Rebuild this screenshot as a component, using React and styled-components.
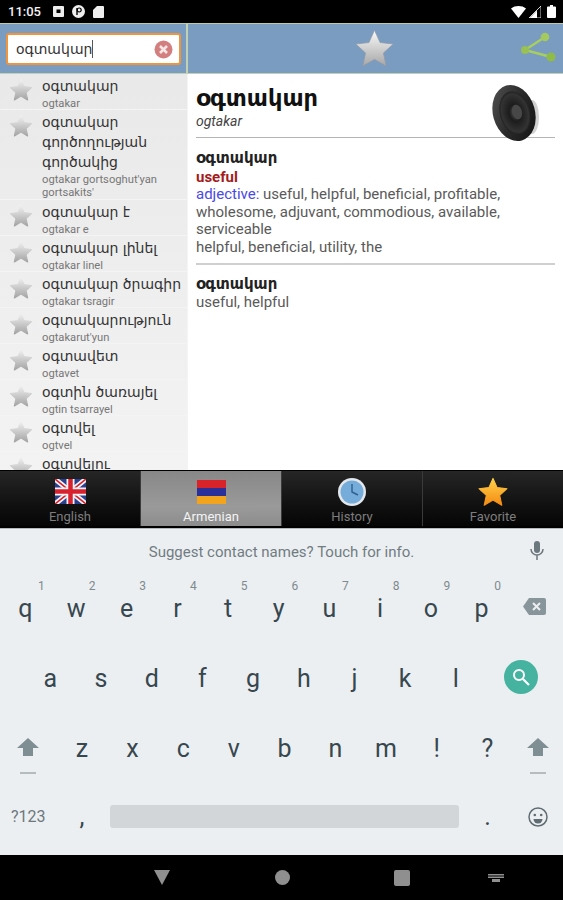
import React from "react";
import styled, { createGlobalStyle } from "styled-components";

const GlobalStyle = createGlobalStyle`
  html, body { margin: 0; padding: 0; background: #000; }
  body { font-family: Roboto, "Liberation Sans", sans-serif; }
`;

const ARM = `"DejaVu Sans", "Noto Sans", sans-serif`;

const Screen = styled.div`
  width: 563px;
  height: 900px;
  display: flex;
  flex-direction: column;
  overflow: hidden;
  background: #fff;
`;

/* status bar */
const StatusBar = styled.div`
  height: 23px;
  flex: none;
  background: #000;
  display: flex;
  align-items: center;
  padding: 0 7px 0 8px;
  color: #f2f2f2;
`;
const Clock = styled.span`
  font-size: 13px;
  font-weight: 500;
  width: 45px;
`;
const StatusIcons = styled.div`
  display: flex;
  align-items: center;
  gap: ${(p) => p.$gap}px;
  margin-left: ${(p) => (p.$right ? "auto" : "0")};
`;

/* top part */
const Main = styled.div`
  height: 447px;
  flex: none;
  display: grid;
  grid-template-columns: 188px 1fr;
  grid-template-rows: 51px 1fr;
  overflow: hidden;
`;
const SearchHeader = styled.div`
  background: #7a9cc1;
  border-top: 1px solid #bdc9a8;
  border-bottom: 1px solid #c3d0b4;
  border-right: 2px solid #c3d0b4;
  padding: 9px 5px 6px 6px;
  box-sizing: border-box;
`;
const SearchBox = styled.div`
  height: 32px;
  box-sizing: border-box;
  border: 2px solid #f0953c;
  border-radius: 3px;
  background: #fff;
  display: flex;
  align-items: center;
  padding: 0 6px 0 8px;
`;
const SearchText = styled.span`
  font-family: ${ARM};
  font-size: 14px;
  color: #333;
  border-right: 1px solid #555;
  line-height: 18px;
`;
const ClearButton = styled.span`
  margin-left: auto;
  display: flex;
`;
const ActionHeader = styled.div`
  background: #7a9cc1;
  border-top: 1px solid #bdc9a8;
  border-bottom: 1px solid #c3d0b4;
  box-sizing: border-box;
  display: grid;
  grid-template-columns: 1fr auto 1fr;
  align-items: center;
  padding-right: 3px;
`;
const ActionSlot = styled.div`
  grid-column: ${(p) => p.$col};
  justify-self: ${(p) => p.$align};
  display: flex;
  margin-right: ${(p) => p.$inset || 0}px;
`;

/* word list */
const WordList = styled.div`
  background: linear-gradient(#e9e9e9, #f3f3f3);
  overflow: hidden;
  border-right: 1px solid #f4f4f4;
`;
const WordRow = styled.div`
  display: flex;
  box-sizing: border-box;
  padding: 2px 3px ${(p) => (p.$tall ? 1 : 0)}px 9px;
  box-shadow: inset 0 -1px 0 #f4f4f4;
`;
const StarSlot = styled.div`
  width: 33px;
  flex: none;
  padding-top: 2px;
`;
const WordText = styled.div`
  min-width: 0;
`;
const WordTitle = styled.div`
  font-family: ${ARM};
  font-size: 14px;
  line-height: 20px;
  color: #333;
`;
const WordTranslit = styled.div`
  font-size: 11.2px;
  line-height: 13px;
  margin-top: 1px;
  color: #777;
`;

/* entry */
const Entry = styled.div`
  padding: 12px 8px 0 8px;
  background: #fff;
`;
const EntryHead = styled.div`
  position: relative;
  height: 51px;
  border-bottom: 1px solid #b5b5b5;
`;
const EntryTitle = styled.div`
  font-family: ${ARM};
  font-size: 22.5px;
  font-weight: bold;
  line-height: 24px;
  color: #111;
`;
const EntryTranslit = styled.div`
  font-size: 14px;
  font-style: italic;
  line-height: 22px;
  color: #444;
`;
const SpeakerIcon = styled.div`
  position: absolute;
  right: 13px;
  top: -3px;
  display: flex;
`;
const Block = styled.div`
  padding: ${(p) => (p.$rule ? "11px 0 6px" : "10px 0 9px")};
  border-bottom: ${(p) => (p.$rule ? "2px solid #cfcfcf" : "none")};
`;
const BlockWord = styled.div`
  font-family: ${ARM};
  font-size: 15px;
  font-weight: bold;
  line-height: 19px;
  color: #222;
`;
const Meaning = styled.div`
  font-size: 15px;
  font-weight: bold;
  line-height: 18px;
  color: #a31c1c;
`;
const BodyText = styled.div`
  font-size: 15px;
  line-height: 17.7px;
  color: #5a5a5a;
`;
const PartOfSpeech = styled.span`
  color: #4a4ae6;
`;

/* tabs */
const TabBar = styled.div`
  height: 58px;
  flex: none;
  display: grid;
  grid-template-columns: repeat(4, 1fr);
  gap: 1px;
  background: #3a3a3a;
  border-top: 1px solid #000;
  border-bottom: 2px solid #000;
  box-sizing: border-box;
`;
const Tab = styled.div`
  display: flex;
  flex-direction: column;
  align-items: center;
  background: ${(p) => (p.$active ? "linear-gradient(#888, #9a9a9a 65%, #8c8c8c)" : "linear-gradient(#262626, #111 60%, #050505)")};
  color: ${(p) => (p.$active ? "#f4f4f4" : "#7d7d7d")};
  font-size: 13px;
  line-height: 14px;
`;
const TabIcon = styled.div`
  height: 31px;
  margin: 5px 0 3px;
  display: flex;
  align-items: center;
`;

/* keyboard */
const Keyboard = styled.div`
  height: 327px;
  flex: none;
  box-sizing: border-box;
  border-top: 1px solid #b5b9bb;
  background: #eceff1;
  display: flex;
  flex-direction: column;
`;
const SuggestStrip = styled.div`
  height: 44px;
  flex: none;
  position: relative;
  display: flex;
  align-items: center;
  justify-content: center;
  font-size: 15px;
  color: #707c82;
  box-sizing: border-box;
  padding-top: 2px;
`;
const MicIcon = styled.div`
  position: absolute;
  right: 19px;
  top: 12px;
  display: flex;
`;
const KeyRow = styled.div`
  height: ${(p) => p.$h || 70}px;
  flex: none;
  display: flex;
  padding-left: ${(p) => p.$inset || 0}px;
`;
const Key = styled.div`
  position: relative;
  width: ${(p) => p.$w || 50.7}px;
  flex: none;
  display: flex;
  align-items: center;
  justify-content: center;
  font-size: 25px;
  color: #37474f;
`;
const KeyHint = styled.span`
  position: absolute;
  top: 6px;
  right: 6px;
  font-size: 12px;
  color: #7e8a90;
`;
const SymbolsKey = styled.span`
  font-size: 16px;
  color: #6c787e;
`;
const SpaceBar = styled.div`
  flex: 1;
  align-self: center;
  height: 23px;
  border-radius: 3px;
  background: #d2d6d9;
  margin: 0 3px;
`;
const SearchKey = styled.div`
  width: 34px;
  height: 34px;
  border-radius: 50%;
  background: #45b3a0;
  display: flex;
  align-items: center;
  justify-content: center;
  margin-bottom: 2px;
`;
const ShiftGlyph = styled.svg`
  margin-top: 15px;
`;
const BackspaceGlyph = styled.svg`
  margin-bottom: 4px;
`;

/* navigation bar */
const NavBar = styled.div`
  flex: 1;
  background: #000;
  display: grid;
  grid-template-columns: repeat(3, 120px) 68px;
  justify-content: start;
  justify-items: center;
  align-items: center;
  padding-left: 102px;
  box-sizing: border-box;
`;

const STAR_PATH = "M12 1.8l3.1 6.9 7.4.8-5.5 5 1.6 7.4-6.6-3.8-6.6 3.8L7 14.5l-5.5-5 7.4-.8z";

const ListStar = ({ id }) => (
  <svg width="24" height="24" viewBox="0 0 24 24">
    <defs>
      <linearGradient id={id} x1="0" y1="0" x2="0" y2="1">
        <stop offset="0" stopColor="#f0f0f0" />
        <stop offset="1" stopColor="#a4a4a4" />
      </linearGradient>
    </defs>
    <path d={STAR_PATH} fill={`url(#${id})`} stroke={`url(#${id})`} strokeWidth="1.2" strokeLinejoin="round" />
  </svg>
);

const HeaderStar = () => (
  <svg width="43" height="43" viewBox="0 0 24 24">
    <defs>
      <linearGradient id="headStar" x1="0" y1="0" x2="0" y2="1">
        <stop offset="0" stopColor="#fafafa" />
        <stop offset="1" stopColor="#a6a6a6" />
      </linearGradient>
    </defs>
    <path d={STAR_PATH} fill="url(#headStar)" stroke="#8c99a8" strokeWidth=".4" strokeLinejoin="round" />
  </svg>
);

const ShareIcon = () => (
  <svg width="38" height="36" viewBox="0 0 38 36">
    <path d="M26 6L6 19l26 7" fill="none" stroke="#a6cf5e" strokeWidth="2.400" />
    <circle cx="26" cy="6" r="4.300" fill="#a3c95f" />
    <circle cx="6" cy="19" r="4" fill="#98c052" />
    <circle cx="32" cy="26" r="4.500" fill="#8fbb48" />
  </svg>
);

const Speaker = () => (
  <svg width="52" height="60" viewBox="0 0 52 60">
    <defs>
      <radialGradient id="cone" cx="0.5" cy="0.5" r="0.55">
        <stop offset="0" stopColor="#4d4d4d" />
        <stop offset="0.35" stopColor="#1c1c1c" />
        <stop offset="0.8" stopColor="#333" />
        <stop offset="1" stopColor="#111" />
      </radialGradient>
      <linearGradient id="rim" x1="0" y1="0" x2="1" y2="1">
        <stop offset="0" stopColor="#555" />
        <stop offset="0.5" stopColor="#2a2a2a" />
        <stop offset="1" stopColor="#111" />
      </linearGradient>
    </defs>
    <ellipse cx="42" cy="34" rx="7" ry="17" fill="#bdbdbd" opacity=".7" />
    <ellipse cx="24" cy="30" rx="21" ry="28.500" transform="rotate(-16 24 30)" fill="url(#rim)" />
    <ellipse cx="25" cy="30" rx="15" ry="22" transform="rotate(-16 25 30)" fill="url(#cone)" />
    <ellipse cx="27" cy="29" rx="5" ry="7.500" transform="rotate(-16 27 29)" fill="#474747" />
  </svg>
);

const UkFlag = () => (
  <svg width="31" height="25" viewBox="0 0 31 25">
    <path d="M0 0h31v25H0z" fill="#2a3f8f" />
    <path d="M0 0l31 25M31 0L0 25" stroke="#f4f4f4" strokeWidth="5" />
    <path d="M0 0l31 25M31 0L0 25" stroke="#d8202f" strokeWidth="1.600" />
    <path d="M15.500 0v25M0 12.500h31" stroke="#f4f4f4" strokeWidth="8" />
    <path d="M15.500 0v25M0 12.500h31" stroke="#d8202f" strokeWidth="4.500" />
  </svg>
);

const AmFlag = () => (
  <svg width="29" height="24" viewBox="0 0 29 24">
    <rect width="29" height="8" fill="#d9232b" />
    <rect y="8" width="29" height="8" fill="#2b2f9a" />
    <rect y="16" width="29" height="8" fill="#f2a41c" />
  </svg>
);

const ClockIcon = () => (
  <svg width="30" height="30" viewBox="0 0 30 30">
    <circle cx="15" cy="15" r="14" fill="#e4e8ec" />
    <circle cx="15" cy="15" r="11.500" fill="#76acd9" />
    <path d="M15 7v8l6 3" fill="none" stroke="#2f5f8f" strokeWidth="1.400" />
  </svg>
);

const FavStar = () => (
  <svg width="32" height="32" viewBox="0 0 24 24">
    <defs>
      <linearGradient id="favStar" x1="0" y1="0" x2="0" y2="1">
        <stop offset="0" stopColor="#ffd24a" />
        <stop offset="1" stopColor="#f58a12" />
      </linearGradient>
    </defs>
    <path d={STAR_PATH} fill="url(#favStar)" stroke="url(#favStar)" strokeWidth=".8" strokeLinejoin="round" />
  </svg>
);

const ShiftIcon = () => (
  <ShiftGlyph width="24" height="38" viewBox="0 0 24 38">
    <path d="M12 1L23 11h-6v8H7v-8H1z" fill="#7f8e93" />
    <rect x="4" y="35" width="16" height="2" fill="#b4bcc0" />
  </ShiftGlyph>
);

const WORDS = [
  { hy: "օգտակար", tr: "ogtakar" },
  { hy: "օգտակար գործողության գործակից", tr: "ogtakar gortsoghut'yan gortsakits'", tall: true },
  { hy: "օգտակար է", tr: "ogtakar e" },
  { hy: "օգտակար լինել", tr: "ogtakar linel" },
  { hy: "օգտակար ծրագիր", tr: "ogtakar tsragir" },
  { hy: "օգտակարություն", tr: "ogtakarut'yun" },
  { hy: "օգտավետ", tr: "ogtavet" },
  { hy: "օգտին ծառայել", tr: "ogtin tsarrayel" },
  { hy: "օգտվել", tr: "ogtvel" },
  { hy: "օգտվելու" },
];

const TOP_KEYS = [
  ["q", "1"], ["w", "2"], ["e", "3"], ["r", "4"], ["t", "5"],
  ["y", "6"], ["u", "7"], ["i", "8"], ["o", "9"], ["p", "0"],
];

const App = () => (
  <Screen>
    <GlobalStyle />
    <StatusBar>
      <Clock>11:05</Clock>
      <StatusIcons $gap={8}>
        <svg width="11" height="11" viewBox="0 0 11 11">
          <path d="M1 0h9a1 1 0 011 1v9a1 1 0 01-1 1H1a1 1 0 01-1-1V1a1 1 0 011-1z" fill="#eee" />
          <rect x="3.500" y="3.500" width="4" height="3.500" fill="#000" />
        </svg>
        <svg width="13" height="13" viewBox="0 0 13 13">
          <circle cx="6.500" cy="6.500" r="6.500" fill="#eee" />
          <path d="M5 3v7" stroke="#000" strokeWidth="1.400" />
          <circle cx="7.200" cy="5" r="2" fill="none" stroke="#000" strokeWidth="1.200" />
        </svg>
        <svg width="11" height="12" viewBox="0 0 11 12">
          <path d="M4 0h6a1 1 0 011 1v10a1 1 0 01-1 1H1a1 1 0 01-1-1V4z" fill="#eee" />
        </svg>
      </StatusIcons>
      <StatusIcons $right $gap={3}>
        <svg width="15" height="12" viewBox="0 0 15 12">
          <path d="M0 2.500C4-.8 11-.8 15 2.500L7.500 12z" fill="#fff" />
        </svg>
        <svg width="12" height="12" viewBox="0 0 12 12">
          <path d="M12 0v12H0z" fill="none" stroke="#fff" strokeWidth=".8" />
          <path d="M8 4.500V12H0.800z" fill="#fff" />
        </svg>
        <svg width="9" height="13" viewBox="0 0 9 13" style={{ marginLeft: 3 }}>
          <path d="M3 0h3v1.500h2a1 1 0 011 1V12a1 1 0 01-1 1H1a1 1 0 01-1-1V2.500a1 1 0 011-1h2z" fill="#fff" />
        </svg>
      </StatusIcons>
    </StatusBar>

    <Main>
      <SearchHeader>
        <SearchBox>
          <SearchText>օգտակար</SearchText>
          <ClearButton>
            <svg width="19" height="19" viewBox="0 0 19 19">
              <circle cx="9.500" cy="9.500" r="9" fill="#d47f7f" />
              <path d="M6 6l7 7M13 6l-7 7" stroke="#f6e6e6" strokeWidth="2.600" />
            </svg>
          </ClearButton>
        </SearchBox>
      </SearchHeader>
      <ActionHeader>
        <ActionSlot $col={2} $align="center">
          <HeaderStar />
        </ActionSlot>
        <ActionSlot $col={3} $align="end" $inset={3}>
          <ShareIcon />
        </ActionSlot>
      </ActionHeader>

      <WordList>
        {WORDS.map((w, i) => (
          <WordRow key={w.hy} $tall={w.tall}>
            <StarSlot>
              <ListStar id={`star${i}`} />
            </StarSlot>
            <WordText>
              <WordTitle>{w.hy}</WordTitle>
              {w.tr && <WordTranslit>{w.tr}</WordTranslit>}
            </WordText>
          </WordRow>
        ))}
      </WordList>

      <Entry>
        <EntryHead>
          <EntryTitle>օգտակար</EntryTitle>
          <EntryTranslit>ogtakar</EntryTranslit>
          <SpeakerIcon>
            <Speaker />
          </SpeakerIcon>
        </EntryHead>
        <Block $rule>
          <BlockWord>օգտակար</BlockWord>
          <Meaning>useful</Meaning>
          <BodyText>
            <PartOfSpeech>adjective:</PartOfSpeech> useful, helpful, beneficial, profitable,
            <br />
            wholesome, adjuvant, commodious, available,
            <br />
            serviceable
            <br />
            helpful, beneficial, utility, the
          </BodyText>
        </Block>
        <Block>
          <BlockWord>օգտակար</BlockWord>
          <BodyText>useful, helpful</BodyText>
        </Block>
      </Entry>
    </Main>

    <TabBar>
      <Tab>
        <TabIcon><UkFlag /></TabIcon>
        English
      </Tab>
      <Tab $active>
        <TabIcon><AmFlag /></TabIcon>
        Armenian
      </Tab>
      <Tab>
        <TabIcon><ClockIcon /></TabIcon>
        History
      </Tab>
      <Tab>
        <TabIcon><FavStar /></TabIcon>
        Favorite
      </Tab>
    </TabBar>

    <Keyboard>
      <SuggestStrip>
        Suggest contact names? Touch for info.
        <MicIcon>
          <svg width="14" height="20" viewBox="0 0 14 20">
            <rect x="4" y="0" width="6" height="12" rx="3" fill="#6b787e" />
            <path d="M1 8a6 6 0 0012 0M7 14v5" fill="none" stroke="#6b787e" strokeWidth="1.500" />
          </svg>
        </MicIcon>
      </SuggestStrip>
      <KeyRow>
        {TOP_KEYS.map(([k, n]) => (
          <Key key={k}>
            {k}
            <KeyHint>{n}</KeyHint>
          </Key>
        ))}
        <Key $w={56}>
          <BackspaceGlyph width="23" height="17" viewBox="0 0 23 17">
            <path d="M6 0h15a2 2 0 012 2v13a2 2 0 01-2 2H6L0 8.500z" fill="#88959a" />
            <path d="M10 5l7 7M17 5l-7 7" stroke="#eceff1" strokeWidth="2" />
          </BackspaceGlyph>
        </Key>
      </KeyRow>
      <KeyRow $inset={25}>
        {"asdfghjkl".split("").map((k) => (
          <Key key={k}>{k}</Key>
        ))}
        <Key $w={80}>
          <SearchKey>
            <svg width="20" height="20" viewBox="0 0 20 20">
              <circle cx="8" cy="8" r="5" fill="none" stroke="#fff" strokeWidth="2" />
              <path d="M12 12l6 6" stroke="#fff" strokeWidth="2.200" />
            </svg>
          </SearchKey>
        </Key>
      </KeyRow>
      <KeyRow>
        <Key $w={56.5}><ShiftIcon /></Key>
        {"zxcvbnm!?".split("").map((k) => (
          <Key key={k}>{k}</Key>
        ))}
        <Key $w={50}><ShiftIcon /></Key>
      </KeyRow>
      <KeyRow $h={67}>
        <Key $w={56.5}><SymbolsKey>?123</SymbolsKey></Key>
        <Key>,</Key>
        <SpaceBar />
        <Key>.</Key>
        <Key $w={50}>
          <svg width="20" height="20" viewBox="0 0 20 20">
            <circle cx="10" cy="10" r="9" fill="none" stroke="#5f6d73" strokeWidth="1.500" />
            <circle cx="6.800" cy="8" r="1.300" fill="#5f6d73" />
            <circle cx="13.200" cy="8" r="1.300" fill="#5f6d73" />
            <path d="M5.500 12h9a4.500 4.500 0 01-9 0z" fill="#5f6d73" />
          </svg>
        </Key>
      </KeyRow>
    </Keyboard>

    <NavBar>
      <svg width="16" height="15" viewBox="0 0 16 15">
        <path d="M0 0h16L8 15z" fill="#8f8f8f" />
      </svg>
      <svg width="15" height="15" viewBox="0 0 15 15">
        <circle cx="7.500" cy="7.500" r="7.500" fill="#8f8f8f" />
      </svg>
      <svg width="16" height="16" viewBox="0 0 16 16">
        <rect width="16" height="16" rx="2" fill="#8f8f8f" />
      </svg>
      <svg width="16" height="8" viewBox="0 0 16 8">
        <path d="M0 0h16v1.500H0zM0 2.500h16V4H0zM4 5h8v3H4z" fill="#8f8f8f" />
      </svg>
    </NavBar>
  </Screen>
);

export default App;
